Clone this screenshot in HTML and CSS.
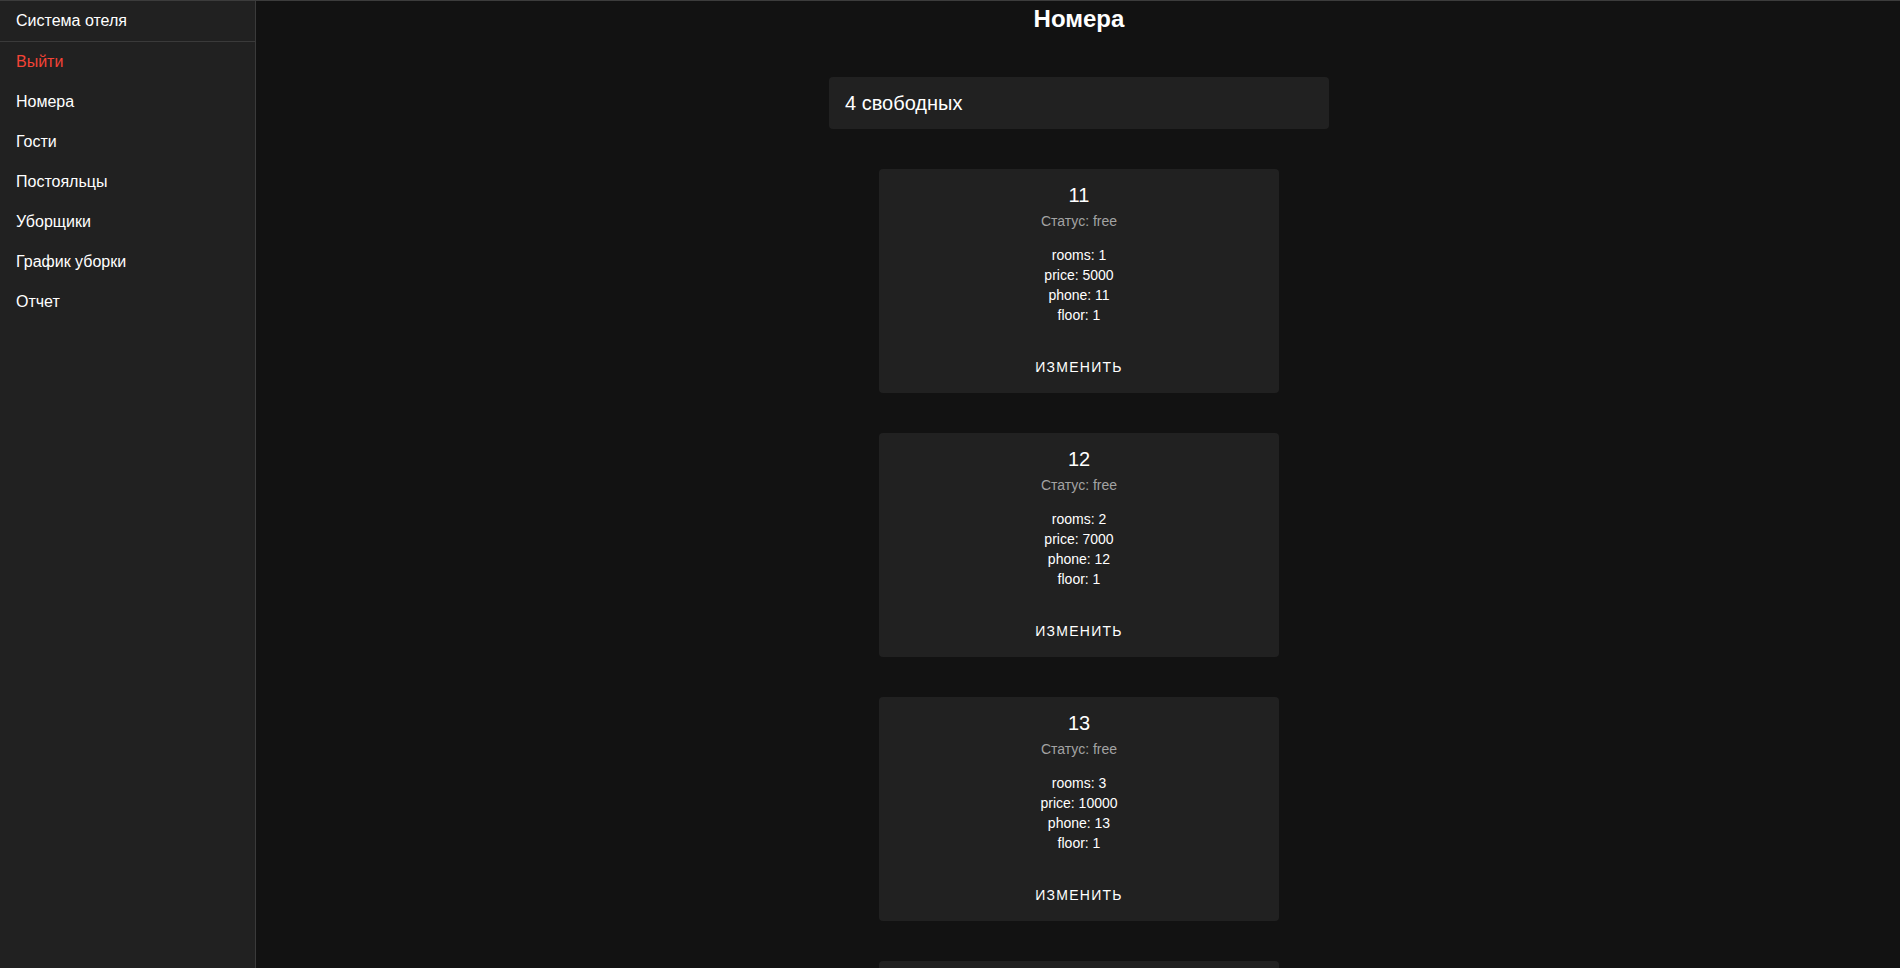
FILE: index.html
```html
<!DOCTYPE html>
<html lang="ru">
<head>
<meta charset="utf-8">
<title>Номера</title>
<link rel="stylesheet" href="styles.css">
</head>
<body>
<aside class="sidebar">
  <div class="brand">Система отеля</div>
  <nav class="menu">
    <a class="menu-item logout">Выйти</a>
    <a class="menu-item">Номера</a>
    <a class="menu-item">Гости</a>
    <a class="menu-item">Постояльцы</a>
    <a class="menu-item">Уборщики</a>
    <a class="menu-item">График уборки</a>
    <a class="menu-item">Отчет</a>
  </nav>
</aside>
<main class="main">
  <h1 class="page-title">Номера</h1>
  <div class="summary">4 свободных</div>
  <div class="cards">
    <section class="card">
      <div class="card-content">
        <div class="room-no">11</div>
        <div class="status">Статус: free</div>
        <div class="props">
          <div>rooms: 1</div>
          <div>price: 5000</div>
          <div>phone: 11</div>
          <div>floor: 1</div>
        </div>
      </div>
      <div class="card-actions"><button class="btn">Изменить</button></div>
    </section>
    <section class="card">
      <div class="card-content">
        <div class="room-no">12</div>
        <div class="status">Статус: free</div>
        <div class="props">
          <div>rooms: 2</div>
          <div>price: 7000</div>
          <div>phone: 12</div>
          <div>floor: 1</div>
        </div>
      </div>
      <div class="card-actions"><button class="btn">Изменить</button></div>
    </section>
    <section class="card">
      <div class="card-content">
        <div class="room-no">13</div>
        <div class="status">Статус: free</div>
        <div class="props">
          <div>rooms: 3</div>
          <div>price: 10000</div>
          <div>phone: 13</div>
          <div>floor: 1</div>
        </div>
      </div>
      <div class="card-actions"><button class="btn">Изменить</button></div>
    </section>
    <section class="card">
      <div class="card-content">
        <div class="room-no">14</div>
        <div class="status">Статус: free</div>
        <div class="props">
          <div>rooms: 1</div>
          <div>price: 5000</div>
          <div>phone: 14</div>
          <div>floor: 1</div>
        </div>
      </div>
      <div class="card-actions"><button class="btn">Изменить</button></div>
    </section>
  </div>
</main>
</body>
</html>
```

FILE: styles.css
```css
html, body {
  margin: 0;
  padding: 0;
}
body {
  background: #121212;
  color: #ffffff;
  font-family: "Liberation Sans", Arial, sans-serif;
  border-top: 1px solid #3c3c3c;
  display: flex;
  min-height: 100vh;
  box-sizing: border-box;
}
.sidebar {
  width: 255px;
  flex: 0 0 255px;
  background: #212121;
  border-right: 1px solid #3a3a3a;
}
.brand {
  height: 40px;
  line-height: 40px;
  padding: 0 16px;
  font-size: 16px;
  border-bottom: 1px solid #3a3a3a;
}
.menu {
  display: flex;
  flex-direction: column;
}
.menu-item {
  display: block;
  height: 40px;
  line-height: 40px;
  padding: 0 16px;
  font-size: 16px;
  color: #ffffff;
  text-decoration: none;
}
.menu-item.logout {
  color: #f44336;
}
.main {
  flex: 1;
  display: flex;
  flex-direction: column;
  align-items: center;
  padding-left: 2px;
}
.page-title {
  margin: 0;
  padding-top: 4px;
  font-size: 24px;
  line-height: 28px;
  font-weight: 700;
}
.summary {
  margin-top: 44px;
  width: 500px;
  box-sizing: border-box;
  padding: 12px 16px;
  font-size: 20px;
  line-height: 28px;
  background: #212121;
  border-radius: 4px;
}
.cards {
  display: flex;
  flex-direction: column;
  gap: 40px;
  margin-top: 40px;
  padding-bottom: 40px;
}
.card {
  width: 400px;
  background: #212121;
  border-radius: 4px;
  text-align: center;
}
.card-content {
  padding: 10px 16px 16px;
}
.room-no {
  font-size: 20px;
  line-height: 32px;
}
.status {
  font-size: 14px;
  line-height: 20px;
  color: #a3a3a3;
}
.props {
  margin-top: 14px;
  font-size: 14px;
  line-height: 20px;
}
.card-actions {
  padding: 8px;
  display: flex;
  justify-content: center;
}
.btn {
  background: transparent;
  border: 0;
  color: #ffffff;
  font-family: "Liberation Sans", Arial, sans-serif;
  font-size: 14px;
  line-height: 24px;
  padding: 6px 8px;
  text-transform: uppercase;
  letter-spacing: 1.25px;
  border-radius: 4px;
  cursor: pointer;
}
```
